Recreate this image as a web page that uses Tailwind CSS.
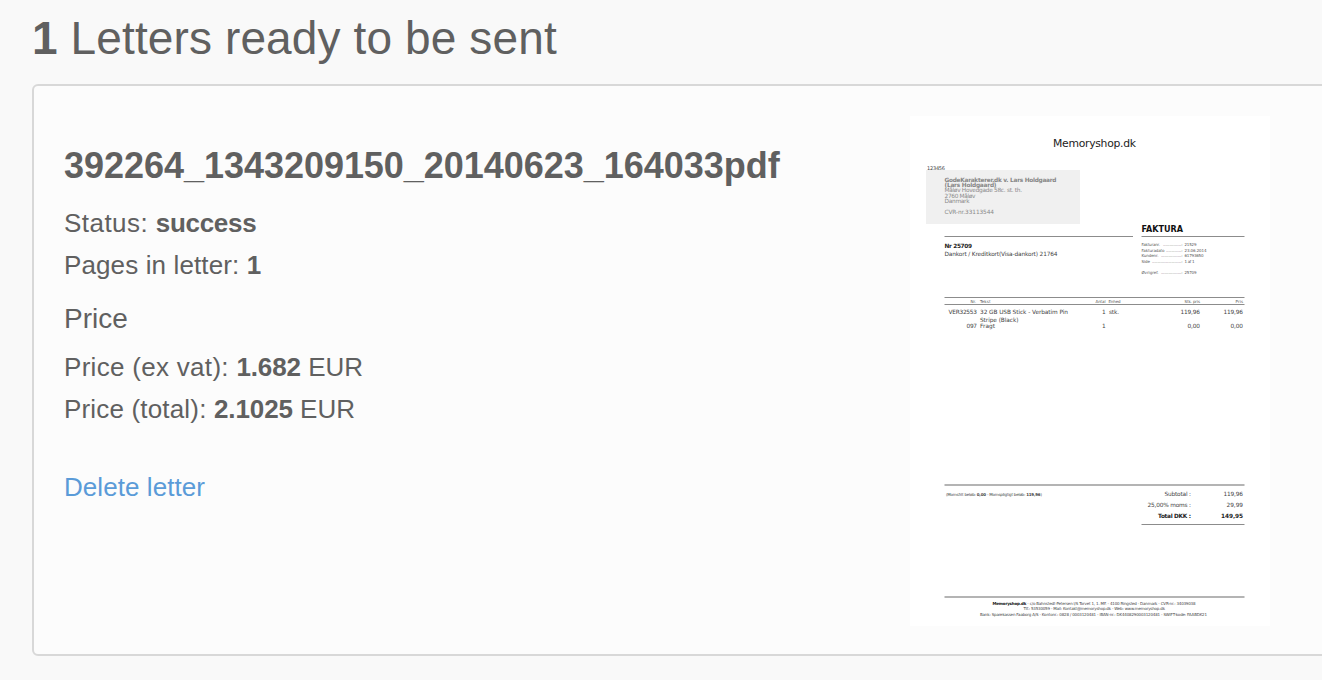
<!DOCTYPE html>
<html lang="en">
<head>
<meta charset="utf-8">
<title>Letters</title>
<script src="https://cdn.jsdelivr.net/npm/@tailwindcss/browser@4"></script>
</head>
<body class="h-[680px] overflow-hidden bg-[#f9f9f9] pl-8 font-['Liberation_Sans',Arial,sans-serif] text-[26px] leading-[42px] text-[#606060]">
<h1 class="h-[84px] pt-[11px] text-[46px] leading-[54px] tracking-[0.12px] whitespace-nowrap"><b>1</b> Letters ready to be sent</h1>
<main class="flex h-[572px] w-[1320px] rounded-[6px] border-2 border-[#d8d8d8] bg-[#fcfcfc] pt-[30px] pl-[30px]">
  <section class="w-[846px] shrink-0 whitespace-nowrap">
    <h2 class="mt-[29px] text-[36px] leading-[42px] font-bold tracking-[-0.03px]">392264_1343209150_20140623_164033pdf</h2>
    <p class="mt-[15px]"><span class="tracking-[0.45px]">Status: </span><b class="tracking-[-0.3px]">success</b></p>
    <p><span class="tracking-[0.12px]">Pages in letter: </span><b>1</b></p>
    <h3 class="mt-3 text-[28px]">Price</h3>
    <p class="mt-[6px]"><span class="tracking-[0.3px]">Price (ex vat): </span><b class="tracking-[-0.1px]">1.682</b> EUR</p>
    <p><span class="tracking-[0.17px]">Price (total): </span><b class="tracking-[-0.1px]">2.1025</b> EUR</p>
    <a href="#" class="mt-9 block tracking-[0.06px] text-[#5a9bd8]">Delete letter</a>
  </section>
  <svg class="h-[510px] w-[360px] shrink-0 bg-white font-['DejaVu_Sans',Verdana,sans-serif]" viewBox="0 0 360 510" fill="#444" font-size="5.8">
    <text x="143" y="30.5" font-size="10.8" fill="#222" textLength="83">Memoryshop.dk</text>
    <text x="17" y="53.7" font-size="5" textLength="18">123456</text>
    <rect x="16" y="54" width="154" height="54" fill="#f0f0f0"/>
    <g fill="#8a8a8a">
      <g font-weight="bold" fill="#858585">
        <text x="34.5" y="65.7" textLength="112">GodeKarakterer.dk v. Lars Holdgaard</text>
        <text x="34.5" y="71" textLength="52">(Lars Holdgaard)</text>
      </g>
      <text x="34.5" y="76.4" textLength="77.5">Måløv Hovedgade 58c. st. th.</text>
      <text x="34.5" y="81.7" textLength="31">2760 Måløv</text>
      <text x="34.5" y="87.2" textLength="25">Danmark</text>
      <text x="34.5" y="98.2" textLength="49.5">CVR-nr.33113544</text>
    </g>
    <g stroke="#8c8c8c" stroke-width="1">
      <path d="M34.5 120.5H223M231.5 120.5H334.5M34.5 181.5H334.5M34.5 188.5H334.5M231.5 408.5H334.5"/>
      <path d="M34.5 369H334.5M34.5 481H334.5" stroke="#b4b4b4" stroke-width="2"/>
    </g>
    <text x="231.5" y="116" font-size="8" font-weight="bold" fill="#111" textLength="41.5" lengthAdjust="spacingAndGlyphs">FAKTURA</text>
    <text x="34.5" y="132.3" font-weight="bold" fill="#222" textLength="27.5">Nr 25709</text>
    <text x="34.5" y="140" textLength="113">Dankort / Kreditkort(Visa-dankort) 21764</text>
    <g font-size="4" fill="#555">
      <text x="231.5" y="130.4" textLength="18.5">Fakturanr.</text><text x="253" y="130.4" textLength="19.5">.................:</text><text x="274.5" y="130.4" textLength="12">21529</text>
      <text x="231.5" y="135.9" textLength="23">Fakturadato</text><text x="256" y="135.9" textLength="16.5">..............:</text><text x="274.5" y="135.9" textLength="22">23.06.2014</text>
      <text x="231.5" y="141.4" textLength="17">Kundenr.</text><text x="251" y="141.4" textLength="21.5">...................:</text><text x="274.5" y="141.4" textLength="19">61793650</text>
      <text x="231.5" y="146.9" textLength="8.5">Side</text><text x="242" y="146.9" textLength="30.5">...........................:</text><text x="274.5" y="146.9" textLength="10">1 af 1</text>
      <text x="231.5" y="157.8" textLength="17">Øvrigref.</text><text x="251" y="157.8" textLength="21.5">...................:</text><text x="274.5" y="157.8" textLength="12">25709</text>
      <text x="60.5" y="187" textLength="5.5">Nr.</text>
      <text x="70" y="187" textLength="10.5">Tekst</text>
      <text x="185.5" y="187" textLength="10">Antal</text>
      <text x="198.5" y="187" textLength="12">Enhed</text>
      <text x="274.5" y="187" textLength="15.5">Stk. pris</text>
      <text x="325.5" y="187" textLength="7.5">Pris</text>
    </g>
    <text x="38.5" y="198.2" textLength="28.5">VER32553</text>
    <text x="70" y="198.2" textLength="88">32 GB USB Stick - Verbatim Pin</text>
    <text x="192" y="198.2">1</text>
    <text x="199" y="198.2" textLength="10">stk.</text>
    <text x="270.5" y="198.2" textLength="19.5">119,96</text>
    <text x="313.5" y="198.2" textLength="19.5">119,96</text>
    <text x="70" y="205.5" textLength="38.5">Stripe (Black)</text>
    <text x="56.5" y="212.4" textLength="10.5">097</text>
    <text x="70" y="212.4" textLength="15">Fragt</text>
    <text x="192" y="212.4">1</text>
    <text x="277.5" y="212.4" textLength="12.5">0,00</text>
    <text x="320.5" y="212.4" textLength="12.5">0,00</text>
    <text x="36" y="380" font-size="4" textLength="96">(Momsfrit beløb: <tspan font-weight="bold">0,00</tspan> - Momspligtigt beløb: <tspan font-weight="bold">119,96</tspan>)</text>
    <text x="254.5" y="380.3" textLength="26.5">Subtotal :</text>
    <text x="313.5" y="380.3" textLength="19.5">119,96</text>
    <text x="237.5" y="391.3" textLength="43.5">25,00% moms :</text>
    <text x="316.5" y="391.3" textLength="16.5">29,99</text>
    <g font-weight="bold" fill="#222">
      <text x="248" y="402" textLength="33">Total DKK :</text>
      <text x="311" y="402" textLength="22">149,95</text>
    </g>
    <g font-size="4">
      <text x="82.5" y="488.6" textLength="203"><tspan font-weight="bold" fill="#111">Memoryshop.dk</tspan> - c/o Bahnstedt-Petersen I/S Torvet 1, 1. MF. - 4100 Ringsted - Danmark - CVR-nr.: 34039038</text>
      <text x="113.5" y="494.2" textLength="141.5">Tlf.: 53530059 - Mail: Kontakt@memoryshop.dk - Web: www.memoryshop.dk</text>
      <text x="70" y="499.7" textLength="227">Bank: Sparekassen Faaborg A/S - Kontonr.: 0828 / 0003120481 - IBAN-nr.: DK4408290003120481 - SWIFT-kode: FAABDK21</text>
    </g>
  </svg>
</main>
</body>
</html>
